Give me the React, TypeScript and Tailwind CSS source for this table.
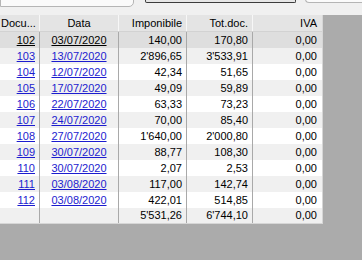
import React from "react";

type Row = { doc: string; data: string; imp: string; tot: string; iva: string };

const rows: Row[] = [
  { doc: "102", data: "03/07/2020", imp: "140,00", tot: "170,80", iva: "0,00" },
  { doc: "103", data: "13/07/2020", imp: "2'896,65", tot: "3'533,91", iva: "0,00" },
  { doc: "104", data: "12/07/2020", imp: "42,34", tot: "51,65", iva: "0,00" },
  { doc: "105", data: "17/07/2020", imp: "49,09", tot: "59,89", iva: "0,00" },
  { doc: "106", data: "22/07/2020", imp: "63,33", tot: "73,23", iva: "0,00" },
  { doc: "107", data: "24/07/2020", imp: "70,00", tot: "85,40", iva: "0,00" },
  { doc: "108", data: "27/07/2020", imp: "1'640,00", tot: "2'000,80", iva: "0,00" },
  { doc: "109", data: "30/07/2020", imp: "88,77", tot: "108,30", iva: "0,00" },
  { doc: "110", data: "30/07/2020", imp: "2,07", tot: "2,53", iva: "0,00" },
  { doc: "111", data: "03/08/2020", imp: "117,00", tot: "142,74", iva: "0,00" },
  { doc: "112", data: "03/08/2020", imp: "422,01", tot: "514,85", iva: "0,00" },
];

const cols = "grid grid-cols-[40px_79px_68px_66px_69px]";

export default function App() {
  return (
    <div
      className="w-[362px] h-[260px] bg-[#ababab] flex flex-col overflow-hidden text-[11px] leading-none"
      style={{ fontFamily: '"Liberation Sans", Arial, sans-serif' }}
    >
      {/* Top strip with cut-off controls */}
      <div className="h-[15px] bg-[#f0f0f0] flex items-start shrink-0">
        <div className="w-[134px] h-[8px] -mt-px bg-[#fafafa] border border-[#b5b5b5] rounded-br-[5px]" />
        <div className="ml-[11px] w-[151px] h-[4px] -mt-px bg-[#e6e6e6] border-x border-b border-[#3c3c3c] rounded-b-[2px]" />
        <div className="ml-[9px] flex-1 h-[4px] -mt-px bg-[#fbfbfb] border-l border-b border-[#b5b5b5] rounded-bl-[5px]" />
      </div>

      <div className="flex">
        <div className="w-[322px] bg-white">
          {/* Header */}
          <div className={`${cols} h-[17px] bg-[#e4e4e4] border-b border-[#d2d2d2] text-black`}>
            <div className="flex items-center pl-[1px] border-r border-[#f7f7f7]">Docu...</div>
            <div className="flex items-center justify-center border-r border-[#f7f7f7]">Data</div>
            <div className="flex items-center justify-end pr-[4px] border-r border-[#f7f7f7]">Imponibile</div>
            <div className="flex items-center justify-end pr-[4px] border-r border-[#f7f7f7]">Tot.doc.</div>
            <div className="flex items-center justify-end pr-[5px]">IVA</div>
          </div>

          {/* Rows */}
          {rows.map((r, i) => {
            const sel = i === 0;
            const bg = sel ? "bg-[#dedede]" : i % 2 === 1 ? "bg-[#f0f0f0]" : "bg-white";
            const link = sel ? "text-black underline" : "text-[#1c1ccf] underline";
            return (
              <div key={r.doc} className={`${cols} h-[16px] ${bg}`}>
                <div className={`flex items-center justify-end pr-[4px] border-r border-[#a9a9a9] ${link}`}>{r.doc}</div>
                <div className={`flex items-center justify-center border-r border-[#a9a9a9] ${link}`}>{r.data}</div>
                <div className="flex items-center justify-end pr-[4px] border-r border-[#a9a9a9]">{r.imp}</div>
                <div className="flex items-center justify-end pr-[4px] border-r border-[#a9a9a9]">{r.tot}</div>
                <div className="flex items-center justify-end pr-[5px]">{r.iva}</div>
              </div>
            );
          })}

          {/* Totals */}
          <div className={`${cols} h-[16px] bg-[#f0f0f0] border-b border-[#d6d6d6]`}>
            <div className="border-r border-[#a9a9a9]" />
            <div className="border-r border-[#a9a9a9]" />
            <div className="flex items-center justify-end pr-[4px] border-r border-[#a9a9a9]">5'531,26</div>
            <div className="flex items-center justify-end pr-[4px] border-r border-[#a9a9a9]">6'744,10</div>
            <div className="flex items-center justify-end pr-[5px]">0,00</div>
          </div>
        </div>
        <div className="w-px bg-[#d6d6d6] self-stretch" />
      </div>
    </div>
  );
}
